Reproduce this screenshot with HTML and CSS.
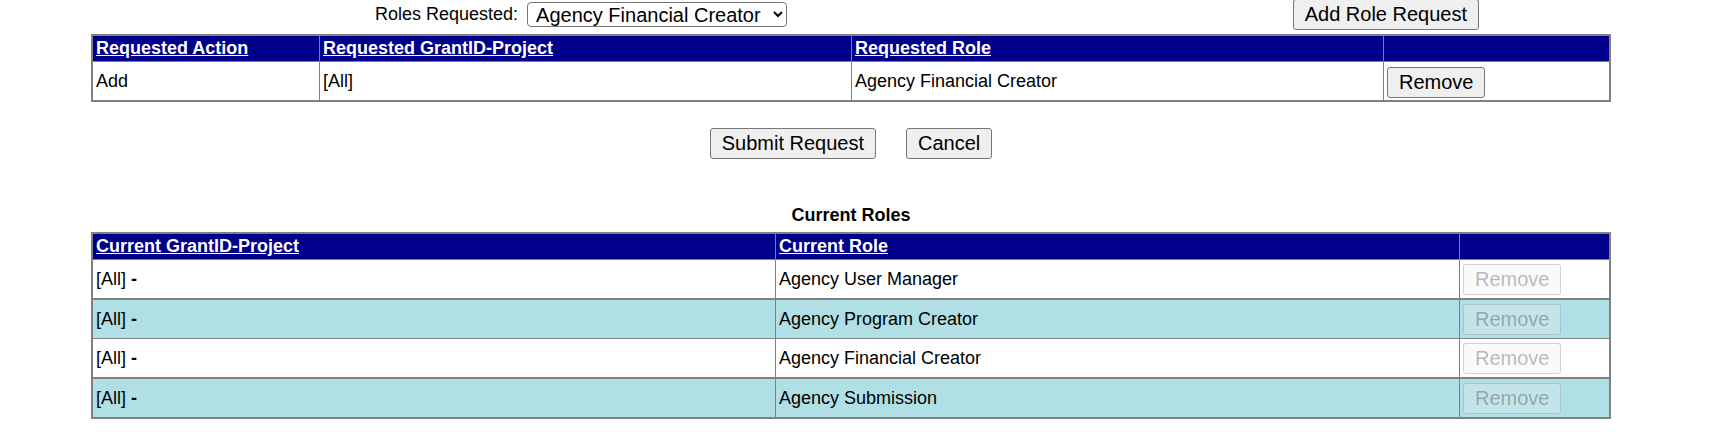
FILE: index.html
```html
<!DOCTYPE html>
<html lang="en">
<head>
<meta charset="utf-8">
<title>Role Request</title>
<link rel="stylesheet" href="styles.css">
</head>
<body>
<div class="page">
  <div class="toprow">
    <div class="rolepick">
      <label class="rolepick-label" for="roleSel">Roles Requested:</label>
      <select id="roleSel" class="role-select">
        <option>Agency Financial Creator</option>
        <option>Agency Program Creator</option>
        <option>Agency User Manager</option>
        <option>Agency Submission</option>
      </select>
    </div>
    <button class="btn" type="button">Add Role Request</button>
  </div>

  <table class="grid req">
    <colgroup>
      <col class="rq-a"><col class="rq-b"><col class="rq-c"><col>
    </colgroup>
    <thead>
      <tr>
        <th><a href="#">Requested Action</a></th>
        <th><a href="#">Requested GrantID-Project</a></th>
        <th><a href="#">Requested Role</a></th>
        <th></th>
      </tr>
    </thead>
    <tbody>
      <tr>
        <td>Add</td>
        <td>[All]</td>
        <td>Agency Financial Creator</td>
        <td class="btn-cell"><button class="btn" type="button">Remove</button></td>
      </tr>
    </tbody>
  </table>

  <div class="actions">
    <button class="btn" type="button">Submit Request</button>
    <button class="btn" type="button">Cancel</button>
  </div>

  <h3 class="section-title">Current Roles</h3>

  <table class="grid cur">
    <colgroup>
      <col class="cr-a"><col class="cr-b"><col>
    </colgroup>
    <thead>
      <tr>
        <th><a href="#">Current GrantID-Project</a></th>
        <th><a href="#">Current Role</a></th>
        <th></th>
      </tr>
    </thead>
    <tbody>
      <tr>
        <td>[All] <b>-</b></td>
        <td>Agency User Manager</td>
        <td class="btn-cell"><button class="btn" type="button" disabled>Remove</button></td>
      </tr>
      <tr class="alt">
        <td>[All] <b>-</b></td>
        <td>Agency Program Creator</td>
        <td class="btn-cell"><button class="btn" type="button" disabled>Remove</button></td>
      </tr>
      <tr>
        <td>[All] <b>-</b></td>
        <td>Agency Financial Creator</td>
        <td class="btn-cell"><button class="btn" type="button" disabled>Remove</button></td>
      </tr>
      <tr class="alt">
        <td>[All] <b>-</b></td>
        <td>Agency Submission</td>
        <td class="btn-cell"><button class="btn" type="button" disabled>Remove</button></td>
      </tr>
    </tbody>
  </table>
</div>
</body>
</html>
```

FILE: styles.css
```css
body {
  margin: 0;
  font-family: "Liberation Sans", Arial, sans-serif;
  color: #000;
  background: #fff;
}

.page {
  width: 1520px;
  margin-left: 91px;
}

.toprow {
  box-sizing: border-box;
  height: 28px;
  display: flex;
  align-items: center;
  justify-content: space-between;
  padding: 0 132px 0 284px;
}

.rolepick {
  display: flex;
  align-items: center;
}

.rolepick-label {
  font-size: 18px;
  margin-right: 9px;
}

.role-select {
  box-sizing: border-box;
  width: 260px;
  height: 25px;
  font-family: "Liberation Sans", Arial, sans-serif;
  font-size: 20px;
  padding: 0 2px 0 4px;
  border: 1px solid #767676;
  border-radius: 4px;
  background: #fff;
  color: #000;
}

.btn {
  font-family: "Liberation Sans", Arial, sans-serif;
  font-size: 20px;
  line-height: 23px;
  padding: 3px 11px;
  border: 1px solid #767676;
  border-radius: 3px;
  background: #efefef;
  color: #000;
  margin: 0;
}

.btn:disabled {
  color: rgba(16, 16, 16, 0.3);
  background: rgba(239, 239, 239, 0.3);
  border-color: rgba(118, 118, 118, 0.3);
}

.grid {
  width: 100%;
  table-layout: fixed;
  border-collapse: separate;
  border-spacing: 0;
  border: 2px solid #808080;
  font-size: 18px;
}

.req {
  margin-top: 6px;
}

.rq-a { width: 227px; }
.rq-b { width: 532px; }
.rq-c { width: 532px; }
.cr-a { width: 683px; }
.cr-b { width: 684px; }

.grid th {
  box-sizing: border-box;
  height: 26px;
  padding: 0 3px;
  background: #00008b;
  text-align: left;
  font-weight: bold;
  border-right: 1px solid #808080;
  border-bottom: 1px solid #808080;
  vertical-align: middle;
}

.grid th a {
  color: #fff;
  text-decoration: underline;
}

.grid td {
  box-sizing: border-box;
  padding: 0 3px;
  border-right: 1px solid #808080;
  vertical-align: middle;
  background: #fff;
}

.grid th:last-child,
.grid td:last-child {
  border-right: none;
}

.req td {
  height: 38px;
}

.req .btn-cell {
  padding-top: 2px;
}

.cur td {
  height: 39px;
  border-bottom: 1px solid #808080;
}

.cur tr.alt td {
  background: #b0e0e6;
  border-top: 1px solid #808080;
  height: 40px;
}

.cur tr:last-child td {
  border-bottom: none;
  height: 39px;
}

.actions {
  display: flex;
  justify-content: center;
  gap: 30px;
  margin-top: 26px;
}

.section-title {
  margin: 46px 0 6px;
  font-size: 18px;
  line-height: 21px;
  font-weight: bold;
  text-align: center;
}
```
